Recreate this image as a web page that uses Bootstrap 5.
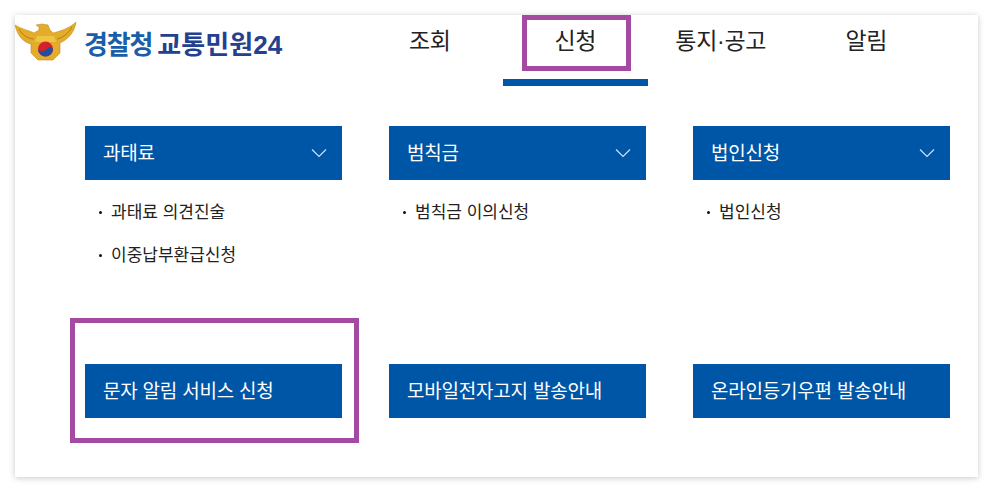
<!DOCTYPE html>
<html lang="ko">
<head>
<meta charset="utf-8">
<title>경찰청 교통민원24</title>
<link rel="stylesheet" href="https://cdn.jsdelivr.net/npm/bootstrap@5.3.0/dist/css/bootstrap.min.css">
<style>
html, body { height: 100%; background: #fff; overflow: hidden; }
body { font-family: "Liberation Sans", "Noto Sans CJK KR", sans-serif; color: #222; padding: 15px 15px 16px; }
.panel-box { height: 462px; background: #fff; box-shadow: 0 1px 6px rgba(0,0,0,.22); }
.top-bar { height: 71px; }
.brand-wrap { width: 342px; padding-top: 7px; }
.brand-text { font-size: 26px; font-weight: 700; letter-spacing: -1.2px; line-height: 30px; margin: 8px 0 0 7px; color: #1a5ea8; white-space: nowrap; }
.brand-text b { color: #24408e; font-weight: 700; letter-spacing: .1px; margin-left: -1px; }
.main-nav { width: 582px; }
.main-nav a { width: 145.5px; height: 71px; padding-top: 8px; font-size: 23px; line-height: 36px; color: #222; text-decoration: none; text-align: center; position: relative; white-space: nowrap; letter-spacing: -.3px; }
.main-nav a.is-on::before { content: ""; position: absolute; left: 19px; top: 0; width: 109px; height: 56px; border: 5px solid #a44aa3; }
.main-nav a.is-on::after { content: ""; position: absolute; left: 0; top: 64px; width: 145px; height: 7px; background: #0056a6; }
.menu-grid { display: grid; grid-template-columns: repeat(3, 257px); column-gap: 47px; padding: 40px 0 0 70px; }
.menu-head { height: 54px; background: #0056a6; color: #fff; font-size: 19px; line-height: 54px; padding: 1px 15px 0 18px; letter-spacing: -.22px; white-space: nowrap; }
.menu-head svg { margin-top: -1px; }
.menu-col-top { height: 238px; }
.sub-list { padding: 11px 0 0 14px; margin: 0; list-style: none; font-size: 17px; line-height: 43px; letter-spacing: 0; color: #222; }
.sub-list li { padding-left: 12px; position: relative; white-space: nowrap; }
.sub-list li::before { content: ""; position: absolute; left: 0; top: 20px; width: 3px; height: 3px; border-radius: 50%; background: #111; }
.marked { position: relative; }
.marked::after { content: ""; position: absolute; left: -15px; top: -46px; width: 289px; height: 125px; border: 5px solid #a44aa3; }
</style>
</head>
<body>
<div class="panel-box">
  <header class="top-bar d-flex">
    <div class="brand-wrap d-flex align-items-start">
      <svg width="62" height="40" viewBox="0 0 62 40" class="flex-shrink-0" aria-label="경찰 엠블럼">
        <path d="M0 3 C6 7 13 8 19 11 L24 8 L24 5 L21 3 L27 2 L33 3 L35 8 L38 11 C46 9 55 6 61 0 C60 9 54 17 45 21 L45 31 L38 38 L23 38 L16 31 L16 22 C7 20 2 12 0 3 Z" fill="#e3ac2a" stroke="#c58f1c" stroke-width=".6"/>
        <path d="M4 7 C8 14 14 17 19 17 M57 5 C53 12 47 16 42 17" fill="none" stroke="#b27f16" stroke-width="1"/>
        <path d="M22 14 L39 14 L41 20 L20 20 Z" fill="#f0c443"/>
        <circle cx="30.500" cy="27" r="7.500" fill="#d2232a"/>
        <path d="M23 27 A7.500 7.500 0 0 0 38 27 C36 24 33 25 30.500 28 C28 30 25 30 23 27 Z" fill="#1f4fa3"/>
      </svg>
      <div class="brand-text">경찰청 <b>교통민원24</b></div>
    </div>
    <nav class="main-nav d-flex">
      <a href="#">조회</a>
      <a href="#" class="is-on">신청</a>
      <a href="#">통지·공고</a>
      <a href="#">알림</a>
    </nav>
  </header>
  <div class="menu-grid">
    <div class="menu-col-top">
      <div class="menu-head d-flex justify-content-between align-items-center">과태료
        <svg width="16" height="10" viewBox="0 0 16 10"><path d="M1 1.500 L8 8.500 L15 1.500" fill="none" stroke="#d6e4f2" stroke-width="1.100"/></svg>
      </div>
      <ul class="sub-list"><li>과태료 의견진술</li><li>이중납부환급신청</li></ul>
    </div>
    <div class="menu-col-top">
      <div class="menu-head d-flex justify-content-between align-items-center">범칙금
        <svg width="16" height="10" viewBox="0 0 16 10"><path d="M1 1.500 L8 8.500 L15 1.500" fill="none" stroke="#d6e4f2" stroke-width="1.100"/></svg>
      </div>
      <ul class="sub-list"><li>범칙금 이의신청</li></ul>
    </div>
    <div class="menu-col-top">
      <div class="menu-head d-flex justify-content-between align-items-center">법인신청
        <svg width="16" height="10" viewBox="0 0 16 10"><path d="M1 1.500 L8 8.500 L15 1.500" fill="none" stroke="#d6e4f2" stroke-width="1.100"/></svg>
      </div>
      <ul class="sub-list"><li>법인신청</li></ul>
    </div>
    <div class="marked"><div class="menu-head">문자 알림 서비스 신청</div></div>
    <div><div class="menu-head">모바일전자고지 발송안내</div></div>
    <div><div class="menu-head">온라인등기우편 발송안내</div></div>
  </div>
</div>
<script src="https://cdn.jsdelivr.net/npm/bootstrap@5.3.0/dist/js/bootstrap.bundle.min.js"></script>
</body>
</html>
